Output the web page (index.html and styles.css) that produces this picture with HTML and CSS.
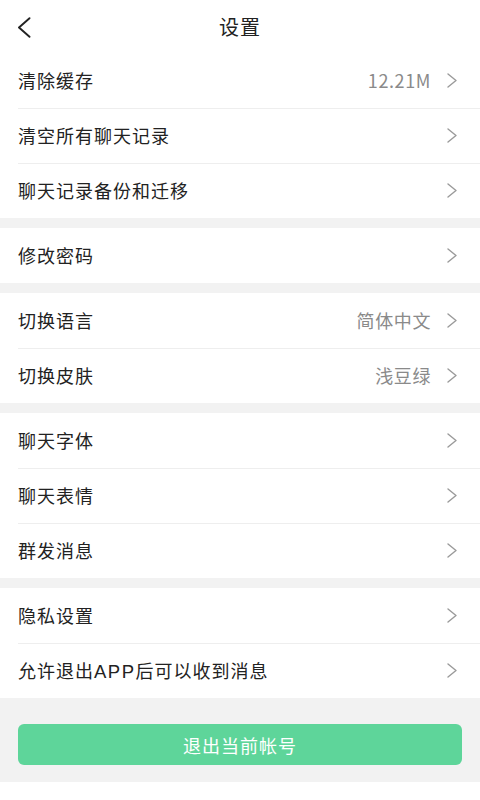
FILE: index.html
```html
<!DOCTYPE html>
<html lang="zh">
<head>
<meta charset="utf-8">
<title>设置</title>
<link rel="stylesheet" href="styles.css">
</head>
<body>
<div class="page">
  <header class="header">
    <span class="back">
      <svg width="14" height="21" viewBox="0 0 14 21"><path d="M12.5 1.2 L2 10.5 L12.5 19.8" fill="none" stroke="#222" stroke-width="1.9" stroke-linecap="round" stroke-linejoin="round"/></svg>
    </span>
    <h1 class="title">设置</h1>
  </header>

  <section class="group">
    <div class="row"><span class="label">清除缓存</span><span class="value">12.21M</span><span class="chev"><svg width="10" height="15" viewBox="0 0 10 15"><path d="M1 1 L9 7.5 L1 14" fill="none" stroke="#9a9a9a" stroke-width="1.4" stroke-linecap="round" stroke-linejoin="round"/></svg></span></div>
    <div class="row"><span class="label">清空所有聊天记录</span><span class="chev"><svg width="10" height="15" viewBox="0 0 10 15"><path d="M1 1 L9 7.5 L1 14" fill="none" stroke="#9a9a9a" stroke-width="1.4" stroke-linecap="round" stroke-linejoin="round"/></svg></span></div>
    <div class="row"><span class="label">聊天记录备份和迁移</span><span class="chev"><svg width="10" height="15" viewBox="0 0 10 15"><path d="M1 1 L9 7.5 L1 14" fill="none" stroke="#9a9a9a" stroke-width="1.4" stroke-linecap="round" stroke-linejoin="round"/></svg></span></div>
  </section>

  <section class="group">
    <div class="row"><span class="label">修改密码</span><span class="chev"><svg width="10" height="15" viewBox="0 0 10 15"><path d="M1 1 L9 7.5 L1 14" fill="none" stroke="#9a9a9a" stroke-width="1.4" stroke-linecap="round" stroke-linejoin="round"/></svg></span></div>
  </section>

  <section class="group">
    <div class="row"><span class="label">切换语言</span><span class="value">简体中文</span><span class="chev"><svg width="10" height="15" viewBox="0 0 10 15"><path d="M1 1 L9 7.5 L1 14" fill="none" stroke="#9a9a9a" stroke-width="1.4" stroke-linecap="round" stroke-linejoin="round"/></svg></span></div>
    <div class="row"><span class="label">切换皮肤</span><span class="value">浅豆绿</span><span class="chev"><svg width="10" height="15" viewBox="0 0 10 15"><path d="M1 1 L9 7.5 L1 14" fill="none" stroke="#9a9a9a" stroke-width="1.4" stroke-linecap="round" stroke-linejoin="round"/></svg></span></div>
  </section>

  <section class="group">
    <div class="row"><span class="label">聊天字体</span><span class="chev"><svg width="10" height="15" viewBox="0 0 10 15"><path d="M1 1 L9 7.5 L1 14" fill="none" stroke="#9a9a9a" stroke-width="1.4" stroke-linecap="round" stroke-linejoin="round"/></svg></span></div>
    <div class="row"><span class="label">聊天表情</span><span class="chev"><svg width="10" height="15" viewBox="0 0 10 15"><path d="M1 1 L9 7.5 L1 14" fill="none" stroke="#9a9a9a" stroke-width="1.4" stroke-linecap="round" stroke-linejoin="round"/></svg></span></div>
    <div class="row"><span class="label">群发消息</span><span class="chev"><svg width="10" height="15" viewBox="0 0 10 15"><path d="M1 1 L9 7.5 L1 14" fill="none" stroke="#9a9a9a" stroke-width="1.4" stroke-linecap="round" stroke-linejoin="round"/></svg></span></div>
  </section>

  <section class="group">
    <div class="row"><span class="label">隐私设置</span><span class="chev"><svg width="10" height="15" viewBox="0 0 10 15"><path d="M1 1 L9 7.5 L1 14" fill="none" stroke="#9a9a9a" stroke-width="1.4" stroke-linecap="round" stroke-linejoin="round"/></svg></span></div>
    <div class="row"><span class="label">允许退出<span class="latin">APP</span>后可以收到消息</span><span class="chev"><svg width="10" height="15" viewBox="0 0 10 15"><path d="M1 1 L9 7.5 L1 14" fill="none" stroke="#9a9a9a" stroke-width="1.4" stroke-linecap="round" stroke-linejoin="round"/></svg></span></div>
  </section>

  <div class="footer">
    <button class="logout">退出当前帐号</button>
  </div>
</div>
</body>
</html>
```
FILE: styles.css
```css
* { box-sizing: border-box; }
html, body { margin: 0; padding: 0; background: #fff; }
body {
  font-family: "Noto Sans CJK SC", "Noto Sans", sans-serif;
  color: #222;
}
.page { width: 480px; background: #f2f2f2; }
.header {
  height: 53px;
  background: #fff;
  display: flex;
  align-items: center;
  justify-content: center;
  position: relative;
}
.back {
  position: absolute;
  left: 17px;
  top: 17px;
  display: flex;
}
.title {
  margin: 0;
  font-size: 20px;
  font-weight: 400;
  letter-spacing: 1px;
  color: #222;
  line-height: 1;
}
.group {
  background: #fff;
  margin-bottom: 10px;
}
.row {
  height: 55px;
  display: flex;
  align-items: center;
  padding: 0 23px 0 18px;
  position: relative;
}
.row + .row::before {
  content: "";
  position: absolute;
  left: 18px;
  right: 0;
  top: 0;
  height: 1px;
  background: #eeeeee;
}
.label {
  flex: 1;
  font-size: 18px;
  letter-spacing: 1px;
  color: #222;
  margin-top: -2px;
}
.latin {
  font-family: "Liberation Sans", "Noto Sans", sans-serif;
  font-size: 18.5px;
  letter-spacing: 1.5px;
}
.value {
  font-size: 18px;
  letter-spacing: 0.6px;
  color: #8a8a8a;
  margin-right: 16px;
  margin-top: -2px;
}
.chev {
  display: flex;
}
.group:last-of-type { margin-bottom: 0; }
.footer {
  padding: 26px 18px 17px;
  background: #f2f2f2;
}
.logout {
  display: block;
  width: 100%;
  height: 41px;
  border: none;
  border-radius: 6px;
  background: #5ed59a;
  color: #fff;
  font-family: "Noto Sans CJK SC", "Noto Sans", sans-serif;
  font-size: 18px;
  letter-spacing: 1px;
}
```
